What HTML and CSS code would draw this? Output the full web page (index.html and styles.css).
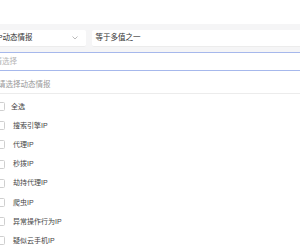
FILE: index.html
```html
<!DOCTYPE html>
<html lang="zh">
<head>
<meta charset="utf-8">
<link rel="stylesheet" href="styles.css">
</head>
<body>
<div class="top"></div>
<div class="panel">
  <div class="filters">
    <div class="select select-field">
      <span class="select-text">IP动态情报</span>
      <svg class="chev" width="6" height="4" viewBox="0 0 6 4"><path d="M0.5 0.5 L3 3 L5.5 0.5" fill="none" stroke="#aaa" stroke-width="0.8"/></svg>
    </div>
    <div class="select select-op">
      <span class="select-text">等于多值之一</span>
    </div>
  </div>
  <div class="search">
    <span class="placeholder">请选择</span>
  </div>
</div>
<div class="dropdown">
  <div class="dd-header">请选择动态情报</div>
  <ul class="options">
    <li class="opt opt-all"><span class="box"></span><span class="label">全选</span></li>
    <li class="opt"><span class="box"></span><span class="label">搜索引擎IP</span></li>
    <li class="opt"><span class="box"></span><span class="label">代理IP</span></li>
    <li class="opt"><span class="box"></span><span class="label">秒拨IP</span></li>
    <li class="opt"><span class="box"></span><span class="label">劫持代理IP</span></li>
    <li class="opt"><span class="box"></span><span class="label">爬虫IP</span></li>
    <li class="opt"><span class="box"></span><span class="label">异常操作行为IP</span></li>
    <li class="opt"><span class="box"></span><span class="label">疑似云手机IP</span></li>
  </ul>
</div>
</body>
</html>
```

FILE: styles.css
```css
html, body {
  margin: 0;
  padding: 0;
  background: #ffffff;
  overflow: hidden;
  width: 300px;
  height: 250px;
}
body {
  font-family: "Liberation Sans", "Noto Sans CJK SC", sans-serif;
  font-size: 7.5px;
  color: #333;
}
.top {
  height: 24px;
  background: #ffffff;
}
.panel {
  background: #f5f5f6;
  padding-top: 6px;
  margin-left: -8px;
}
.filters {
  display: flex;
  gap: 6px;
  height: 17px;
}
.select {
  background: #ffffff;
  border-bottom: 1px solid #ececec;
  box-sizing: border-box;
  display: flex;
  align-items: center;
}
.select-field {
  width: 94px;
  padding-left: 3.5px;
  padding-right: 8px;
  justify-content: space-between;
  border-radius: 0 2px 2px 0;
}
.select-op {
  flex: 1;
  padding-left: 3.5px;
  border-radius: 2px 0 0 2px;
}
.select-text {
  line-height: 10px;
  color: #333;
}
.chev {
  display: block;
}
.search {
  margin-top: 5px;
  height: 19px;
  box-sizing: border-box;
  background: #ffffff;
  border-top: 1px solid #a6b8ec;
  border-bottom: 1px solid #a6b8ec;
  display: flex;
  align-items: center;
  padding-left: 2.5px;
}
.placeholder {
  color: #b5b5b5;
  line-height: 10px;
}
.dropdown {
  background: #ffffff;
  margin-left: -8px;
}
.dd-header {
  padding: 9px 0 3px 6px;
  line-height: 10px;
  color: #999;
  border-bottom: 1px solid #ececec;
}
.options {
  list-style: none;
  margin: 0;
  padding: 3px 0 0 0;
}
.opt {
  height: 19.2px;
  display: flex;
  align-items: center;
  padding-left: 4px;
}
.box {
  width: 9px;
  height: 9px;
  box-sizing: border-box;
  border: 1px solid #cfcfcf;
  border-radius: 1.5px;
  background: #fff;
  flex: none;
}
.label {
  margin-left: 8px;
  font-size: 7px;
  line-height: 10px;
  color: #444;
}
.opt-all .label {
  margin-left: 6px;
}
```
